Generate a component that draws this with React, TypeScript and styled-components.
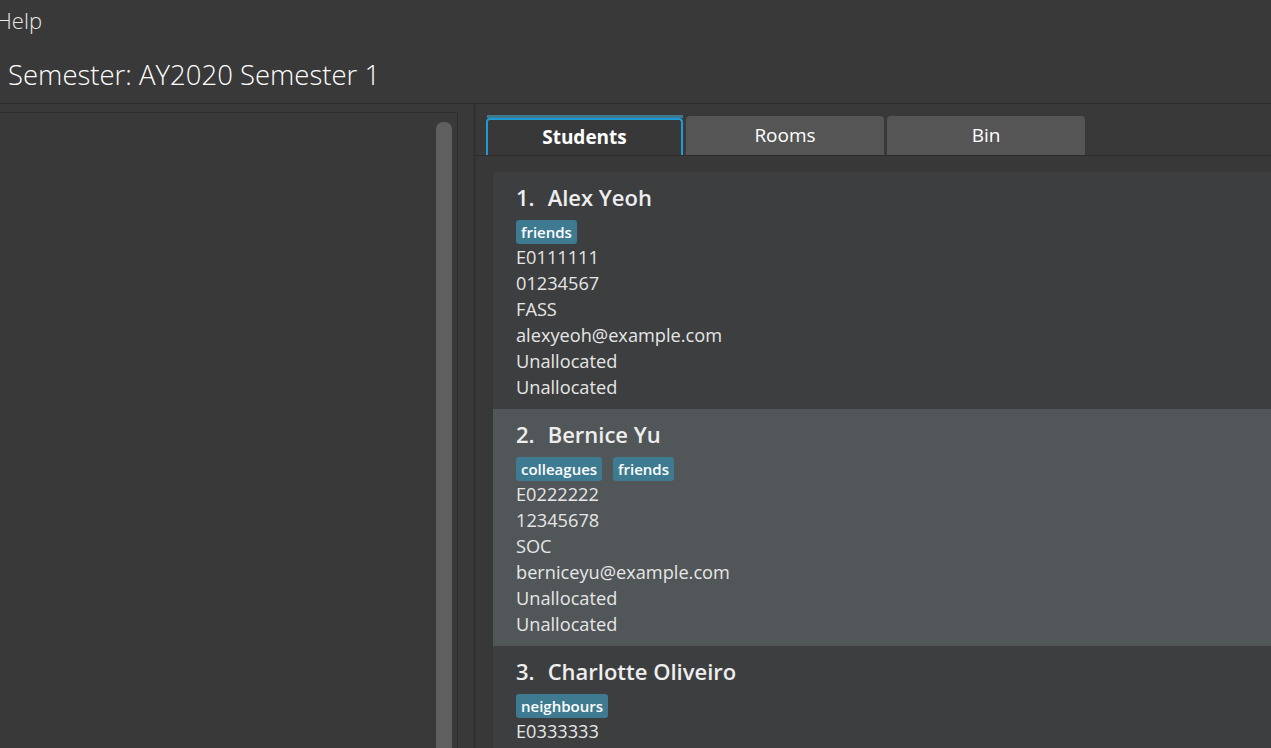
import React from "react";
import styled, {createGlobalStyle} from "styled-components";

const GlobalStyle = createGlobalStyle`
  html, body {
    margin: 0;
    padding: 0;
    background: #393939;
    overflow: hidden;
  }
  body {
    font-family: "Open Sans", "Noto Sans", sans-serif;
    color: #f0f0f0;
  }
`;

const Window = styled.div`
  width: 1271px;
  height: 748px;
  display: flex;
  flex-direction: column;
  background: #393939;
  overflow: hidden;
`;

const MenuBar = styled.div`
  height: 40px;
  display: flex;
  align-items: center;
  font-size: 22px;
  font-weight: 300;
  color: #e8e8e8;
`;

const MenuItem = styled.span`
  margin-left: -4px;
  margin-top: -1px;
`;

const SemesterBar = styled.div`
  height: 64px;
  display: flex;
  align-items: center;
  padding: 5px 0 0 8px;
  box-sizing: border-box;
  font-size: 27.5px;
  font-weight: 300;
  color: #ffffff;
  border-bottom: 1px solid #2b2b2b;
`;

const Split = styled.div`
  flex: 1;
  display: flex;
  min-height: 0;
`;

const LeftPane = styled.div`
  width: 458px;
  padding-top: 8px;
  display: flex;
`;

const ListBox = styled.div`
  flex: 1;
  border-top: 1px solid #2d2d2d;
  border-right: 1px solid #2d2d2d;
  background: #393939;
  display: flex;
  justify-content: flex-end;
  padding: 9px 5px 0 0;
`;

const ScrollThumb = styled.div`
  width: 16px;
  height: 700px;
  border-radius: 7px;
  background: #5f5f5f;
`;

const Divider = styled.div`
  width: 15px;
  border-right: 3px solid #323232;
  background: #393939;
`;

const RightPane = styled.div`
  flex: 1;
  display: flex;
  flex-direction: column;
  min-width: 0;
  background: #383838;
`;

const TabHeader = styled.div`
  height: 51px;
  display: flex;
  align-items: flex-end;
  gap: 3px;
  padding-left: 10px;
  background: #393939;
  border-bottom: 1px solid #2c2c2c;
`;

const Tab = styled.div<{$active?: boolean}>`
  box-sizing: border-box;
  width: ${(p) => (p.$active ? "197px" : "198px")};
  height: ${(p) => (p.$active ? "37px" : "39px")};
  display: flex;
  align-items: center;
  justify-content: center;
  font-size: 19px;
  font-weight: ${(p) => (p.$active ? 700 : 400)};
  color: #ffffff;
  background: ${(p) => (p.$active ? "#383838" : "#555555")};
  border: ${(p) => (p.$active ? "2px solid #1e9bd4" : "none")};
  border-bottom: none;
  border-radius: 4px 4px 0 0;
  position: relative;
  padding-bottom: 2px;
`;

const TabLine = styled.div`
  position: absolute;
  left: -1px;
  right: -2px;
  top: -5px;
  height: 3px;
  background: #3e7b91;
`;

const ListArea = styled.div`
  flex: 1;
  padding: 16px 0 0 17px;
  min-height: 0;
`;

const Card = styled.div<{$odd: boolean}>`
  height: 237px;
  box-sizing: border-box;
  padding: 8px 0 0 23px;
  background: ${(p) => (p.$odd ? "#515658" : "#3c3e3f")};
`;

const Name = styled.div`
  font-size: 22px;
  font-weight: 600;
  color: #eeeeee;
  height: 33px;
  display: flex;
  align-items: center;
  gap: 13px;
`;

const Tags = styled.div`
  display: flex;
  gap: 11px;
  margin: 7px 0 0;
  height: 24px;
`;

const Tag = styled.span`
  background: #3e7b91;
  color: #ffffff;
  font-size: 15px;
  font-weight: 600;
  border-radius: 3px;
  padding: 0 5px;
  height: 24px;
  line-height: 24px;
`;

const Line = styled.div`
  font-size: 18.2px;
  line-height: 26px;
  color: #e6e6e6;
`;

const students = [
  {
    name: "Alex Yeoh",
    tags: ["friends"],
    id: "E0111111",
    phone: "01234567",
    faculty: "FASS",
    email: "alexyeoh@example.com",
  },
  {
    name: "Bernice Yu",
    tags: ["colleagues", "friends"],
    id: "E0222222",
    phone: "12345678",
    faculty: "SOC",
    email: "berniceyu@example.com",
  },
  {
    name: "Charlotte Oliveiro",
    tags: ["neighbours"],
    id: "E0333333",
    phone: "23456789",
    faculty: "FOE",
    email: "charlotte@example.com",
  },
];

export default function App() {
  return (
    <Window>
      <GlobalStyle />
      <MenuBar>
        <MenuItem>Help</MenuItem>
      </MenuBar>
      <SemesterBar>Semester: AY2020 Semester 1</SemesterBar>
      <Split>
        <LeftPane>
          <ListBox>
            <ScrollThumb />
          </ListBox>
        </LeftPane>
        <Divider />
        <RightPane>
          <TabHeader>
            <Tab $active>
              <TabLine />
              Students
            </Tab>
            <Tab>Rooms</Tab>
            <Tab>Bin</Tab>
          </TabHeader>
          <ListArea>
            {students.map((s, i) => (
              <Card key={s.id} $odd={i % 2 === 1}>
                <Name>
                  <span>{i + 1}.</span>
                  <span>{s.name}</span>
                </Name>
                <Tags>
                  {s.tags.map((t) => (
                    <Tag key={t}>{t}</Tag>
                  ))}
                </Tags>
                <Line>{s.id}</Line>
                <Line>{s.phone}</Line>
                <Line>{s.faculty}</Line>
                <Line>{s.email}</Line>
                <Line>Unallocated</Line>
                <Line>Unallocated</Line>
              </Card>
            ))}
          </ListArea>
        </RightPane>
      </Split>
    </Window>
  );
}
